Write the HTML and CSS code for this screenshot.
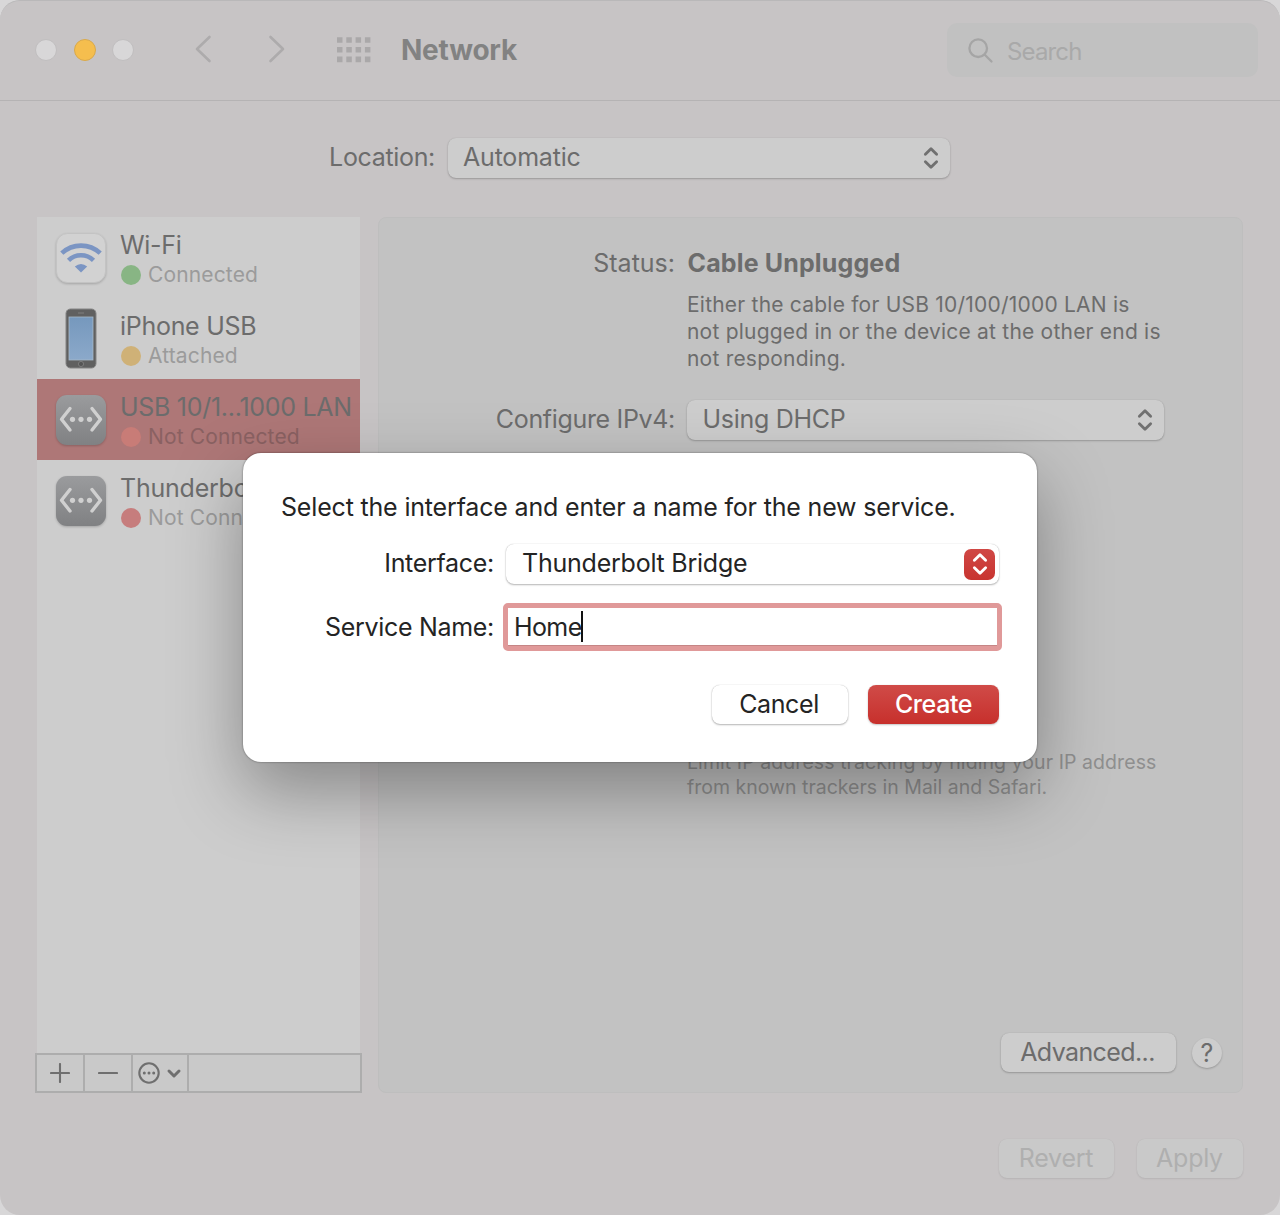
FILE: index.html
```html
<!DOCTYPE html>
<html lang="en">
<head>
<meta charset="utf-8">
<title>Network</title>
<link rel="stylesheet" href="styles.css">
</head>
<body>
<svg class="defs" width="0" height="0" aria-hidden="true">
  <defs>
    <linearGradient id="steel" x1="0" y1="0" x2="0" y2="1"><stop offset="0" stop-color="#9a9b9d"/><stop offset="1" stop-color="#808183"/></linearGradient>
    <linearGradient id="screen" x1="0" y1="0" x2="0" y2="1"><stop offset="0" stop-color="#7698bd"/><stop offset="1" stop-color="#8ba9ca"/></linearGradient>
    <symbol id="updown" viewBox="0 0 16 24"><path d="M2.400 8.200 8 2.800l5.600 5.400M2.400 15.800 8 21.200l5.600-5.400" fill="none" stroke="currentColor" stroke-width="2.900" stroke-linecap="round" stroke-linejoin="round"/></symbol>
    <symbol id="ethernet" viewBox="0 0 50 50">
      <rect width="50" height="50" rx="11" fill="url(#steel)"/>
      <path d="M14 13.500 5.500 24.200 14 35M36 13.500l8.500 10.700L36 35" fill="none" stroke="#d0d0d0" stroke-width="3.400" stroke-linecap="round" stroke-linejoin="round"/>
      <g fill="#d0d0d0"><circle cx="16.500" cy="24.300" r="2.600"/><circle cx="25" cy="24.300" r="2.600"/><circle cx="33.500" cy="24.300" r="2.600"/></g>
    </symbol>
  </defs>
</svg>
<div class="window">
  <header class="toolbar">
    <div class="lights"><i class="light"></i><i class="light amber"></i><i class="light"></i></div>
    <svg class="back" width="18" height="30" viewBox="0 0 18 30"><path d="M15.500 3 3 15l12.500 12" /></svg>
    <svg class="forward" width="18" height="30" viewBox="0 0 18 30"><path d="M2.500 3 15 15 2.500 27"/></svg>
    <svg class="grid" width="34" height="26" viewBox="0 0 34 26"><path d="M0 3h34M0 12.700h34M0 22.400h34"/></svg>
    <h1 class="title"><span class="t-network">Network</span></h1>
    <div class="search">
      <svg width="28" height="28" viewBox="0 0 28 28"><circle cx="11.200" cy="11.200" r="8.800"/><path d="m17.800 17.800 6.700 6.700"/></svg>
      <span class="t-search">Search</span>
    </div>
  </header>
  <main class="content">
    <div class="location">
      <span class="label t-location">Location:</span>
      <div class="select location-select"><span class="t-automatic">Automatic</span><svg class="arrows" width="16" height="24"><use href="#updown"/></svg></div>
    </div>
    <div class="columns">
      <aside class="sidebar">
        <ul class="services">
          <li class="service">
            <svg class="icon wifi" width="50" height="50" viewBox="0 0 50 50"><rect x=".5" y=".5" width="49" height="49" rx="11" fill="#d2d2d2" stroke="#c3c3c3"/><g fill="none" stroke="#7b95c3" stroke-width="4.600"><path d="M5.800 20.200a28 28 0 0 1 38.400 0"/><path d="M12.500 27.300a18 18 0 0 1 25 0"/></g><path d="M25 39.500 18.800 33.500q6.200-5 12.400 0z" fill="#7b95c3"/></svg>
            <div class="info"><span class="name t-iphone">Wi-Fi</span><span class="state"><i class="dot green"></i><span>Connected</span></span></div>
          </li>
          <li class="service">
            <svg class="icon" width="50" height="62" viewBox="0 0 50 62"><rect x="10" y="1" width="30" height="59" rx="4.500" fill="#606060" stroke="#858585"/><rect x="13" y="9" width="24" height="43" fill="url(#screen)" stroke="#a9b9c9" stroke-width=".8"/><path d="M22 5h6" stroke="#777" stroke-width="1.300"/><circle cx="25" cy="56" r="2.600" fill="#555" stroke="#838383" stroke-width=".8"/></svg>
            <div class="info"><span class="name t-iphone">iPhone USB</span><span class="state"><i class="dot yellow"></i><span>Attached</span></span></div>
          </li>
          <li class="service selected">
            <svg class="icon eth" width="50" height="50"><use href="#ethernet"/></svg>
            <div class="info"><span class="name t-usb">USB 10/1...1000 LAN</span><span class="state"><i class="dot pink"></i><span>Not Connected</span></span></div>
          </li>
          <li class="service">
            <svg class="icon eth" width="50" height="50"><use href="#ethernet"/></svg>
            <div class="info"><span class="name t-bridge">Thunderbolt</span><span class="state"><i class="dot red"></i><span>Not Connected</span></span></div>
          </li>
        </ul>
        <div class="actions">
          <span class="action"><svg width="20" height="20" viewBox="0 0 20 20"><path d="M1 10h18M10 1v18"/></svg></span>
          <span class="action"><svg width="20" height="20" viewBox="0 0 20 20"><path d="M1 10h18"/></svg></span>
          <span class="action more"><svg width="44" height="22" viewBox="0 0 44 22"><circle cx="11" cy="11" r="9.700"/><path d="M6.300 11h.01M11 11h.01M15.700 11h.01" stroke-width="3"/><path d="m31 9 5 5 5-5" stroke-width="3"/></svg></span>
        </div>
      </aside>
      <section class="panel">
        <div class="row status"><span class="label">Status:</span><strong class="t-cable">Cable Unplugged</strong></div>
        <p class="detail">Either the cable for USB 10/100/1000 LAN is<br>not plugged in or the device at the other end is<br>not responding.</p>
        <div class="row configure"><span class="label t-configure">Configure IPv4:</span><div class="select ip-select"><span class="t-dhcp">Using DHCP</span><svg class="arrows" width="16" height="24"><use href="#updown"/></svg></div></div>
        <p class="tracking"><span class="t-limit">Limit IP address tracking by hiding your IP address</span><br>from known trackers in Mail and Safari.</p>
        <div class="panel-foot"><span class="button advanced"><span class="t-advanced">Advanced...</span></span><span class="help">?</span></div>
      </section>
    </div>
    <footer class="footer"><span class="button disabled revert"><span class="t-revert">Revert</span></span><span class="button disabled apply"><span class="t-revert">Apply</span></span></footer>
  </main>
  <div class="dialog">
    <p class="prompt">Select the interface and enter a name for the new service.</p>
    <div class="field"><span class="label">Interface:</span><div class="select interface-select"><span class="t-bridge">Thunderbolt Bridge</span><span class="stepper"><svg width="16" height="24"><use href="#updown"/></svg></span></div></div>
    <div class="field name-field"><span class="label">Service Name:</span><div class="input"><span class="t-home">Home</span><i class="caret"></i></div></div>
    <div class="buttons"><span class="button cancel">Cancel</span><span class="button create">Create</span></div>
  </div>
</div>
</body>
</html>
```
FILE: styles.css
```css
* { box-sizing: border-box; }
body { margin: 0; width: 1280px; height: 1215px; overflow: hidden; background: #d8d7d8; font-family: Inter, "Liberation Sans", sans-serif; font-size: 25px; line-height: 30px; color: #6c6c6c; white-space: nowrap; }
.defs { position: absolute; }
svg { display: block; flex: none; }
.window { position: relative; height: 1215px; background: #c7c4c5; border-radius: 20px; border-top: 1px solid #b9b8b9; overflow: hidden; }
.toolbar { display: flex; align-items: center; height: 100px; border-bottom: 1px solid #b5b3b4; padding: 0 22px 2px 35px; }
.lights { display: flex; gap: 16.500px; }
.light { width: 22px; height: 22px; border-radius: 50%; background: #d8d7d8; border: 1px solid #c0bebf; }
.amber { background: #f5be4e; border-color: #d9a94b; }
.back, .forward { fill: none; stroke: #adabac; stroke-width: 2.600; stroke-linecap: round; stroke-linejoin: round; }
.back { margin-left: 60px; margin-top: -1px; }
.forward { margin-left: 56px; margin-top: -1px; }
.grid { margin-left: 51px; fill: none; stroke: #aaa8a9; stroke-width: 5.600; stroke-dasharray: 5.500 3.800; }
.title { margin: 0 0 0 30px; font-size: 28px; font-weight: 700; line-height: 34px; color: #828282; }
.t-network { letter-spacing: -.22px; }
.search { display: flex; align-items: center; gap: 12px; width: 311px; height: 54px; margin-left: auto; padding: 3px 20px 0; border-radius: 10px; background: #c1c1c1; color: #a9a9a9; font-size: 24px; letter-spacing: -.85px; }
.t-search { margin-top: 1px; }
.search svg { fill: none; stroke: #a5a5a5; stroke-width: 2.300; stroke-linecap: round; }
.content { padding: 37px 37px 0 36px; }
.location { display: flex; align-items: center; height: 40px; padding-left: 291px; }
.location .label { width: 108px; }
.label { flex: none; text-align: right; position: relative; top: -1px; }
.t-location, .t-configure { letter-spacing: -.33px; }
.t-automatic { letter-spacing: -.2px; }
.select { display: flex; align-items: center; justify-content: space-between; height: 40px; padding: 0 11px 2px 16px; border-radius: 8px; background: #cdcdcd; box-shadow: 0 1px 2px rgba(0,0,0,.22), 0 0 1px rgba(0,0,0,.15); }
.location-select { width: 502px; margin-left: 13px; padding-left: 15px; }
.arrows { color: #707070; position: relative; top: 1px; }
.columns { display: flex; gap: 17px; margin-top: 39px; height: 876px; }
.sidebar { width: 325px; display: flex; flex-direction: column; }
.services { list-style: none; width: 323px; height: 836px; margin: 0 1px; padding: 0; background: #cdcdcd; }
.service { display: flex; align-items: center; gap: 14px; height: 81px; padding-left: 19px; }
.service.selected { background: #ae7777; }
.wifi, .eth { filter: drop-shadow(0 1px 1px rgba(0,0,0,.2)); }
.info { display: flex; flex-direction: column; margin-top: 5px; }
.t-iphone, .t-usb { letter-spacing: -.29px; }
.state { display: flex; align-items: center; gap: 7px; padding-left: 1px; font-size: 21px; letter-spacing: .14px; color: #9b9b9b; }
.selected .state { color: #8a6162; }
.dot { width: 20px; height: 20px; border-radius: 50%; }
.green { background: #88b584; }
.yellow { background: #cfb177; }
.pink { background: #c87c77; }
.red { background: #c67d7d; }
.actions { display: flex; width: 327px; height: 40px; margin-left: -1px; border: 2px solid #adadad; background: #c9c9c9; }
.action { display: flex; align-items: center; justify-content: center; width: 48px; border-right: 2px solid #adadad; }
.action svg { fill: none; stroke: #6f6f6f; stroke-width: 2.100; stroke-linecap: round; stroke-linejoin: round; }
.more { width: 56px; }
.panel { display: flex; flex-direction: column; width: 865px; padding: 30px 20px 20px 0; border: 1px solid #bebebe; border-radius: 8px; background: #c2c2c2; }
.row { display: flex; align-items: center; }
.row .label { width: 296px; }
.status { gap: 12.500px; }
.status .label { top: 0; }
.status strong { font-weight: 700; letter-spacing: .15px; }
.detail { margin: 13px 0 0 308px; font-size: 21px; line-height: 27px; letter-spacing: .215px; }
.configure { gap: 12px; margin-top: 28px; }
.ip-select { width: 477px; padding-left: 15.500px; }
.t-dhcp { letter-spacing: -.3px; }
.tracking { margin: 310px 0 0 308px; font-size: 19.500px; line-height: 25px; color: #8f8f8f; }
.t-limit { letter-spacing: .075px; }
.panel-foot { display: flex; align-items: center; justify-content: flex-end; gap: 16px; margin-top: auto; }
.button { display: flex; align-items: center; justify-content: center; height: 39px; padding-bottom: 2px; border-radius: 8px; background: #cdcdcd; box-shadow: 0 1px 2px rgba(0,0,0,.22), 0 0 1px rgba(0,0,0,.15); }
.advanced { width: 175px; padding-right: 2px; letter-spacing: -.6px; }
.help { width: 30px; height: 30px; border-radius: 50%; background: #cdcdcd; text-align: center; box-shadow: 0 1px 2px rgba(0,0,0,.22); }
.footer { display: flex; justify-content: flex-end; gap: 23px; margin-top: 46px; }
.disabled { padding-right: 1px; background: #c9c9c9; color: #afafaf; box-shadow: 0 1px 2px rgba(0,0,0,.08), 0 0 1px rgba(0,0,0,.08); }
.t-revert { letter-spacing: -.25px; }
.revert { width: 115px; }
.apply { width: 106px; }
.dialog { position: absolute; left: 243px; top: 452px; width: 794px; height: 309px; padding: 39px 38px 0; border-radius: 18px; background: #fff; color: #242424; box-shadow: 0 0 2px rgba(0,0,0,.5), 0 28px 70px rgba(0,0,0,.34); }
.prompt { margin: 0; letter-spacing: -.175px; }
.field { display: flex; align-items: center; height: 40px; margin-top: 22px; letter-spacing: -.3px; }
.field .label { width: 213px; }
.interface-select { width: 494px; margin-left: 12px; padding-right: 4px; background: #fff; box-shadow: 0 1px 2px rgba(0,0,0,.28), 0 0 1px rgba(0,0,0,.25); }
.t-bridge { letter-spacing: -.23px; }
.stepper { display: flex; align-items: center; justify-content: center; width: 31px; height: 31px; margin-top: 2px; border-radius: 7px; color: #fff; background: linear-gradient(#d04845, #c83430); }
.name-field { height: 48px; margin-top: 19px; }
.name-field .label { top: 0; }
.input { display: flex; align-items: center; width: 500px; height: 48px; margin: 0 -3px 0 9px; padding: 0 0 0 7px; border: 5px solid #e09999; border-radius: 5px; box-shadow: inset 0 -2px 0 -1px #c58585; }
.t-home { margin-left: -1px; letter-spacing: -.6px; }
.caret { width: 2px; height: 31px; margin: -2px 0 0 -1px; background: #111; }
.buttons { display: flex; justify-content: flex-end; gap: 20px; margin-top: 34px; letter-spacing: -.4px; }
.cancel { width: 136px; padding-right: 2px; background: #fff; box-shadow: 0 1px 2px rgba(0,0,0,.28), 0 0 1px rgba(0,0,0,.25); }
.create { width: 131px; color: #fff; font-weight: 500; background: linear-gradient(#d04b48, #c7302c); }
```
